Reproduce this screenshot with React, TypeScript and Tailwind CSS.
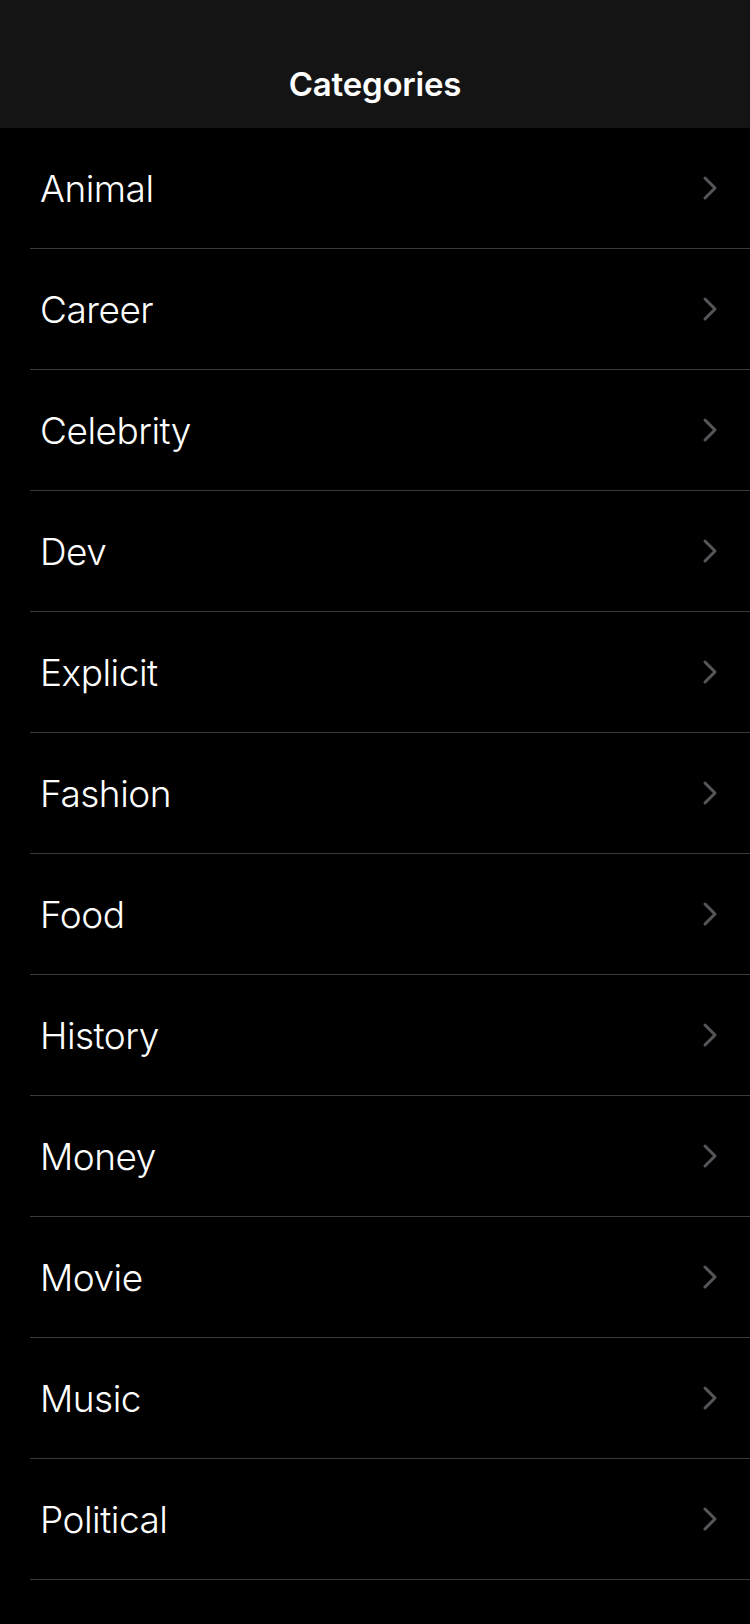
const categories = [
  'Animal',
  'Career',
  'Celebrity',
  'Dev',
  'Explicit',
  'Fashion',
  'Food',
  'History',
  'Money',
  'Movie',
  'Music',
  'Political',
];

function Chevron() {
  return (
    <svg width="16" height="26" viewBox="0 0 16 26" fill="none" className="shrink-0">
      <path
        d="M3 3 L13 13 L3 23"
        stroke="#56565a"
        strokeWidth="3"
        strokeLinecap="round"
        strokeLinejoin="round"
      />
    </svg>
  );
}

export default function App() {
  return (
    <div className="min-h-[1624px] w-[750px] bg-black font-['Inter','Liberation_Sans',sans-serif] text-white">
      <header className="flex h-[128px] items-end justify-center bg-[#141414] pb-[19px]">
        <h1 className="text-[33px] font-semibold tracking-[-0.2px]">Categories</h1>
      </header>

      <ul>
        {categories.map((name) => (
          <li key={name} className="pl-[30px]">
            <div className="flex h-[121px] items-center justify-between border-b border-[#3a3a3c] pl-[10px] pr-[32px]">
              <span className="pt-[2px] text-[37px] font-light tracking-[-0.5px]">{name}</span>
              <Chevron />
            </div>
          </li>
        ))}
      </ul>
    </div>
  );
}
